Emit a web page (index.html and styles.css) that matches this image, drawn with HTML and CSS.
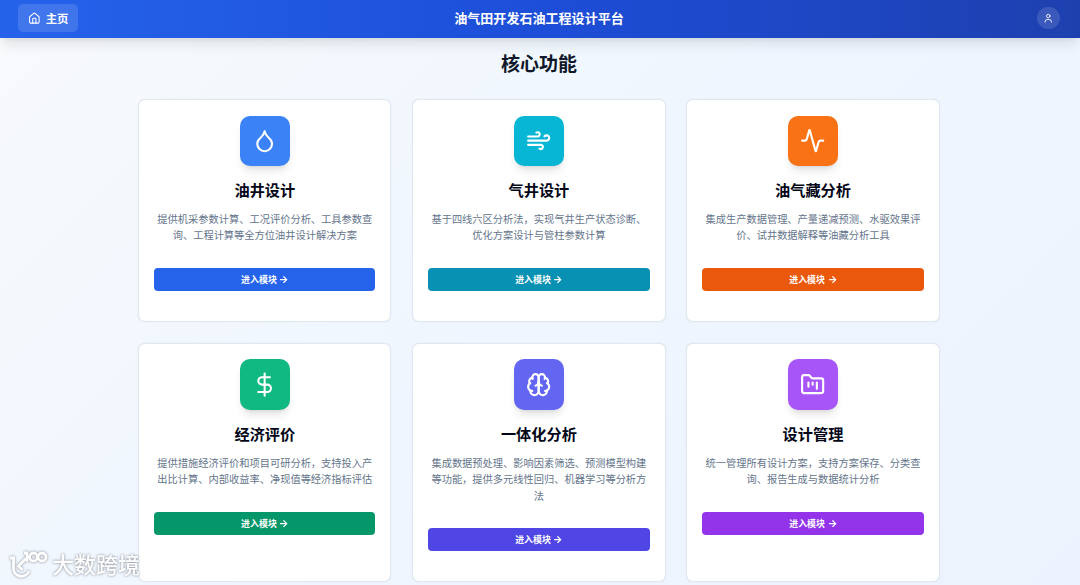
FILE: index.html
```html
<!DOCTYPE html>
<html lang="zh-CN">
<head>
<meta charset="utf-8">
<title>油气田开发石油工程设计平台</title>
<link rel="stylesheet" href="styles.css">
</head>
<body>
<header class="topbar">
  <button class="home"><svg class="icon" viewBox="0 0 24 24"><path d="M15 21v-8a1 1 0 0 0-1-1h-4a1 1 0 0 0-1 1v8"/><path d="M3 10a2 2 0 0 1 .709-1.528l7-5.999a2 2 0 0 1 2.582 0l7 5.999A2 2 0 0 1 21 10v9a2 2 0 0 1-2 2H5a2 2 0 0 1-2-2z"/></svg><span>主页</span></button>
  <h1 class="brand">油气田开发石油工程设计平台</h1>
  <div class="account"><span class="avatar"><svg class="icon" viewBox="0 0 24 24"><path d="M19 21v-2a4 4 0 0 0-4-4H9a4 4 0 0 0-4 4v2"/><circle cx="12" cy="7" r="4"/></svg></span></div>
</header>
<main class="main">
  <h2 class="heading">核心功能</h2>
  <div class="grid">
    <section class="card blue">
      <div class="tile"><svg class="icon" viewBox="0 0 24 24"><path d="M12 22a7 7 0 0 0 7-7c0-2-1-3.900-3-5.500s-3.500-4-4-6.500c-.5 2.500-2 4.900-4 6.500C6 11.100 5 13 5 15a7 7 0 0 0 7 7z"/></svg></div>
      <h3 class="title">油井设计</h3>
      <p class="desc">提供机采参数计算、工况评价分析、工具参数查询、工程计算等全方位油井设计解决方案</p>
      <button class="enter">进入模块<svg class="icon" viewBox="0 0 24 24"><path d="M4 12h16"/><path d="m12.500 4.500 7.500 7.500-7.500 7.500"/></svg></button>
    </section>
    <section class="card cyan">
      <div class="tile"><svg class="icon" viewBox="0 0 24 24"><path d="M12.800 19.600A2 2 0 1 0 14 16H2"/><path d="M17.500 8a2.500 2.500 0 1 1 2 4H2"/><path d="M9.800 4.400A2 2 0 1 1 11 8H2"/></svg></div>
      <h3 class="title">气井设计</h3>
      <p class="desc">基于四线六区分析法，实现气井生产状态诊断、优化方案设计与管柱参数计算</p>
      <button class="enter">进入模块<svg class="icon" viewBox="0 0 24 24"><path d="M4 12h16"/><path d="m12.500 4.500 7.500 7.500-7.500 7.500"/></svg></button>
    </section>
    <section class="card orange">
      <div class="tile"><svg class="icon" viewBox="0 0 24 24"><path d="M22 12h-2.480a2 2 0 0 0-1.930 1.460l-2.350 8.360a.25.25 0 0 1-.480 0L9.240 2.180a.25.25 0 0 0-.480 0l-2.350 8.360A2 2 0 0 1 4.490 12H2"/></svg></div>
      <h3 class="title">油气藏分析</h3>
      <p class="desc">集成生产数据管理、产量递减预测、水驱效果评价、试井数据解释等油藏分析工具</p>
      <button class="enter">进入模块<svg class="icon" viewBox="0 0 24 24"><path d="M4 12h16"/><path d="m12.500 4.500 7.500 7.500-7.500 7.500"/></svg></button>
    </section>
    <section class="card green">
      <div class="tile"><svg class="icon" viewBox="0 0 24 24"><path d="M12 1.500v21"/><path d="M17 5H9.500a3.500 3.500 0 0 0 0 7h5a3.500 3.500 0 0 1 0 7H6"/></svg></div>
      <h3 class="title">经济评价</h3>
      <p class="desc">提供措施经济评价和项目可研分析，支持投入产出比计算、内部收益率、净现值等经济指标评估</p>
      <button class="enter">进入模块<svg class="icon" viewBox="0 0 24 24"><path d="M4 12h16"/><path d="m12.500 4.500 7.500 7.500-7.500 7.500"/></svg></button>
    </section>
    <section class="card indigo">
      <div class="tile"><svg class="icon" viewBox="0 0 24 24"><path d="M12 5a3 3 0 1 0-5.997.125 4 4 0 0 0-2.526 5.770 4 4 0 0 0 .556 6.588A4 4 0 1 0 12 18Z"/><path d="M12 5a3 3 0 1 1 5.997.125 4 4 0 0 1 2.526 5.770 4 4 0 0 1-.556 6.588A4 4 0 1 1 12 18Z"/><path d="M15 13a4.500 4.500 0 0 1-3-4 4.500 4.500 0 0 1-3 4"/><path d="M17.599 6.500a3 3 0 0 0 .399-1.375"/><path d="M6.003 5.125A3 3 0 0 0 6.401 6.500"/><path d="M3.477 10.896a4 4 0 0 1 .585-.396"/><path d="M19.938 10.500a4 4 0 0 1 .585.396"/><path d="M6 18a4 4 0 0 1-1.967-.516"/><path d="M19.967 17.484A4 4 0 0 1 18 18"/></svg></div>
      <h3 class="title">一体化分析</h3>
      <p class="desc">集成数据预处理、影响因素筛选、预测模型构建等功能，提供多元线性回归、机器学习等分析方法</p>
      <button class="enter">进入模块<svg class="icon" viewBox="0 0 24 24"><path d="M4 12h16"/><path d="m12.500 4.500 7.500 7.500-7.500 7.500"/></svg></button>
    </section>
    <section class="card purple">
      <div class="tile"><svg class="icon" viewBox="0 0 24 24"><path d="M4 20h16a2 2 0 0 0 2-2V8a2 2 0 0 0-2-2h-7.930a2 2 0 0 1-1.660-.900l-.820-1.200A2 2 0 0 0 7.930 3H4a2 2 0 0 0-2 2v13c0 1.100.900 2 2 2Z"/><path d="M8 10v4"/><path d="M12 10v2"/><path d="M16 10v6"/></svg></div>
      <h3 class="title">设计管理</h3>
      <p class="desc">统一管理所有设计方案，支持方案保存、分类查询、报告生成与数据统计分析</p>
      <button class="enter">进入模块<svg class="icon" viewBox="0 0 24 24"><path d="M4 12h16"/><path d="m12.500 4.500 7.500 7.500-7.500 7.500"/></svg></button>
    </section>
  </div>
</main>
<div class="watermark">
  <svg class="mark" viewBox="0 0 40 30"><path d="M2 9h3.500v10.500a8 8 0 0 0 15.500 2.500M18 9.500 10.500 17l4 4"/><path d="M16 4h3v8.500"/><circle cx="25.500" cy="8" r="4"/><circle cx="34" cy="8" r="4"/></svg>
  <span>大数跨境</span>
</div>
</body>
</html>
```
FILE: styles.css
```css
* { box-sizing: border-box; }
body {
  margin: 0;
  width: 1080px;
  height: 585px;
  overflow: hidden;
  position: relative;
  font-family: "Noto Sans CJK SC", sans-serif;
  color: #020617;
  background: linear-gradient(135deg, #f8fafc 0%, #eff6ff 50%, #ecf3fe 100%);
}
h1, h2, h3, p { margin: 0; }
button { border: 0; font-family: inherit; color: #fff; }
.icon {
  display: block;
  fill: none;
  stroke: currentColor;
  stroke-width: 2;
  stroke-linecap: round;
  stroke-linejoin: round;
}
.topbar {
  position: relative;
  display: grid;
  grid-template-columns: 1fr auto 1fr;
  align-items: center;
  height: 38px;
  padding: 0 20px 2px 18px;
  color: #fff;
  background: linear-gradient(90deg, #2563eb, #1d4ed8 50%, #1e40af);
  box-shadow: 0 9px 13px -3px rgba(0, 0, 0, .1), 0 3px 5px -3px rgba(0, 0, 0, .08);
}
.home {
  justify-self: start;
  display: flex;
  align-items: center;
  gap: 5px;
  width: 60px;
  height: 28px;
  padding: 0 0 0 10px;
  border-radius: 5px;
  background: rgba(255, 255, 255, .13);
  font-size: 11.400px;
  font-weight: 700;
}
.home span { line-height: 16px; padding-bottom: 1px; }
.home .icon { width: 12.700px; height: 12.700px; }
.brand { padding-bottom: 1px; font-size: 13.050px; line-height: 19px; font-weight: 700; }
.account { justify-self: end; }
.avatar {
  display: grid;
  place-items: center;
  width: 22.600px;
  height: 22.600px;
  border-radius: 50%;
  background: rgba(255, 255, 255, .13);
}
.avatar .icon { width: 10.500px; height: 10.500px; }
.main { padding: 11px 140.400px 0 138.200px; }
.heading {
  font-size: 19px;
  line-height: 27px;
  font-weight: 700;
  text-align: center;
  color: #0f172a;
}
.grid {
  display: grid;
  grid-template-columns: repeat(3, 1fr);
  grid-template-rows: 223px 239px;
  gap: 20.800px;
  margin-top: 23.300px;
}
.card {
  padding: 15.300px 15px 0;
  border: 1px solid #e2e8f0;
  border-radius: 7px;
  background: #fff;
  text-align: center;
  box-shadow: 0 0 1px rgba(148, 163, 184, .35);
}
.tile {
  display: grid;
  place-items: center;
  width: 50.400px;
  height: 50.400px;
  margin: 0 auto;
  border-radius: 10px;
  color: #fff;
  background: var(--tile);
  box-shadow: 0 7px 10px -3px rgba(0, 0, 0, .12), 0 3px 4px -3px rgba(0, 0, 0, .1);
}
.tile .icon { width: 25.300px; height: 25.300px; }
.title { margin-top: 11.800px; font-size: 15.200px; line-height: 22px; font-weight: 700; }
.desc {
  margin-top: 11.300px;
  font-size: 10.240px;
  line-height: 16.400px;
  color: #64748b;
}
.enter {
  display: flex;
  align-items: center;
  justify-content: center;
  gap: 2.500px;
  width: 100%;
  height: 23px;
  margin-top: 24.200px;
  padding: 0;
  border-radius: 4px;
  background: var(--button);
  font-size: 8.950px;
  font-weight: 700;
}
.enter .icon { width: 9.200px; height: 9.200px; stroke-width: 3.200; }
.blue { --tile: #3b82f6; --button: #2563eb; }
.cyan { --tile: #06b6d4; --button: #0891b2; }
.orange { --tile: #f97316; --button: #ea580c; }
.green { --tile: #10b981; --button: #059669; }
.indigo { --tile: #6366f1; --button: #4f46e5; }
.purple { --tile: #a855f7; --button: #9333ea; }
.watermark {
  position: absolute;
  left: 8px;
  bottom: 4px;
  display: flex;
  align-items: center;
  gap: 4px;
  color: #fff;
  font-size: 22px;
  line-height: 32px;
  font-weight: 500;
  filter: drop-shadow(0 0 1px rgba(90, 95, 105, .5)) drop-shadow(0 0 1px rgba(90, 95, 105, .3));
}
.watermark span { padding-bottom: 2px; }
.mark { width: 40px; height: 30px; fill: none; stroke: #fff; stroke-width: 2.800; }
```
